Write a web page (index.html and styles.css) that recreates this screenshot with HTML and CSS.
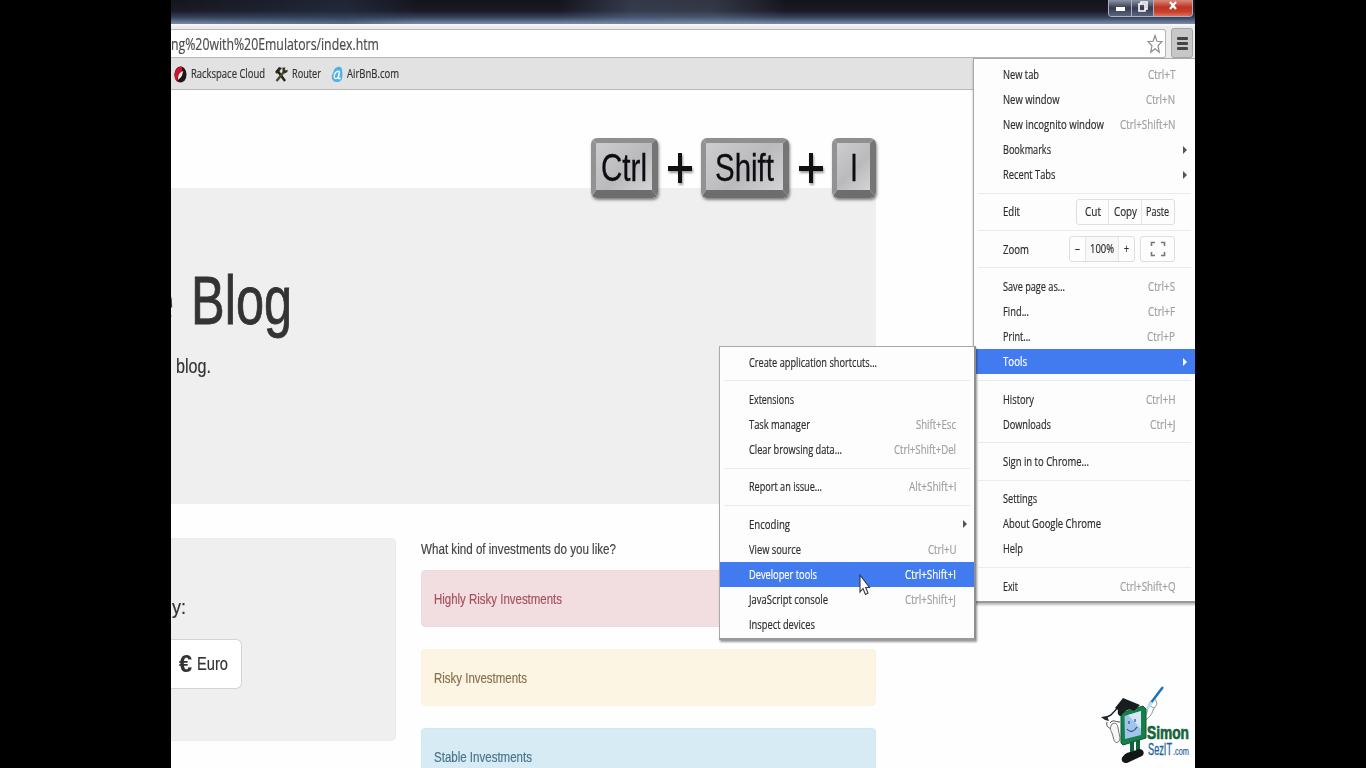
FILE: index.html
```html
<!DOCTYPE html>
<html lang="en">
<head>
<meta charset="utf-8">
<title>Blog</title>
<link rel="stylesheet" href="styles.css">
</head>
<body>
<main class="frame">
  <header class="titlebar">
    <div class="win-controls">
      <span class="win min"><i></i></span>
      <span class="win max"><svg width="10" height="11" viewBox="0 0 10 11"><path d="M3 3V1h6v7H7M1 3h6v7H1z" fill="none" stroke="#fff" stroke-width="1.6"/></svg></span>
      <span class="win close"><svg width="8" height="9" viewBox="0 0 8 9"><path d="M1 1l6 7M7 1L1 8" stroke="#fff" stroke-width="2.3"/></svg></span>
    </div>
  </header>
  <div class="toolbar">
    <div class="omnibox"><span class="t url" data-w="208">ng%20with%20Emulators/index.htm</span>
      <svg class="star" width="16" height="20" viewBox="0 0 16 20"><path d="M8 1.5l1.9 5.8 5 .3-3.9 4.2 1.3 6.5L8 14.8l-4.3 3.5L5 11.800 1.100 7.600l5-.3z" fill="#fff" stroke="#8d8d8d" stroke-width="1.2"/></svg>
    </div>
    <div class="menu-btn"><i></i><i></i><i></i></div>
  </div>
  <nav class="bookmarks">
    <span class="bm"><svg width="13" height="17" viewBox="0 0 13 17"><ellipse cx="6.500" cy="8.500" rx="6" ry="8" fill="#1d1517"/><path d="M8 .6C3 1 .3 5 .5 9.500c.1 3 1.300 5.500 3 6.500 0-5 1-8 4.500-10z" fill="#c8142c"/><path d="M4 14c0-4 .5-6 3-8l2.500-1C8 7 9 10 6 12z" fill="#f4e9ea"/></svg><span class="t" data-w="74">Rackspace Cloud</span></span>
    <span class="bm"><svg width="14" height="17" viewBox="0 0 14 17"><path d="M3 4l8 11" stroke="#25220f" stroke-width="2.400"/><path d="M11.500 4L2.500 15" stroke="#4a4632" stroke-width="2.400"/><path d="M1 6l4-5 3 1-5 6z" fill="#2a2817"/><path d="M8.500 1.500v4l2 2 3-1.500V3.500l-2 1.500-1-1 1-2.500z" fill="#34311b"/></svg><span class="t" data-w="29">Router</span></span>
    <span class="bm"><svg width="12" height="17" viewBox="0 0 12 17"><path d="M3 4C4 1 9-.5 10.500 2c1 2 .8 5 .8 9 0 3-2.300 5-5.300 5S.8 14 .8 11 2 8 3 4z" fill="#4fb0ea"/><path d="M8.500 5.500C6 4.500 3.500 7 3.200 10c-.2 3 2.300 3.500 4 1l1.300-5.500L7.500 12c.2 1.200 1.300 1 2-.3" fill="none" stroke="#fff" stroke-width="1.300"/></svg><span class="t" data-w="52">AirBnB.com</span></span>
  </nav>
  <section class="page">
    <div class="jumbo">
      <h1><span class="t" data-w="146">e Blog</span></h1>
      <p><span class="t" data-w="35">blog.</span></p>
    </div>
    <div class="cols">
      <div class="well">
        <div class="well-label"><span class="t" data-w="14">y:</span></div>
        <div class="euro"><b class="t" data-w="13">€</b><span class="t" data-w="31">Euro</span></div>
      </div>
      <div class="survey">
        <p><span class="t" data-w="195">What kind of investments do you like?</span></p>
        <div class="alert danger"><span class="t" data-w="128">Highly Risky Investments</span></div>
        <div class="alert warning"><span class="t" data-w="93">Risky Investments</span></div>
        <div class="alert info"><span class="t" data-w="98">Stable Investments</span></div>
      </div>
    </div>
  </section>

  <div class="keys">
    <span class="key ctrl"><span class="t" data-w="46">Ctrl</span></span>
    <i class="plus"></i>
    <span class="key shift"><span class="t" data-w="59">Shift</span></span>
    <i class="plus"></i>
    <span class="key letter"><span class="t" data-w="8">I</span></span>
  </div>

  <svg class="logo" width="94" height="82" viewBox="0 0 94 82">
    <path d="M19 36c-5 0-7-3-10 1M6 36c-1 4 1 6 5 7" fill="none" stroke="#444" stroke-width="1"/>
    <path d="M11 38c3-2 6 0 6 4l2 10c0 5-5 6-6 2l-2-7c-2-3-2-6 0-9z" fill="#f6f6f6" stroke="#555" stroke-width=".8"/>
    <path d="M42 31c4-3 5-6 4-9l3-6 5-4 2 6-4 6c-1 5-5 9-10 11M49 20l4 2" fill="#fff" stroke="#777" stroke-width=".8"/>
    <path d="M46 23L61 2" stroke="#bfe0ef" stroke-width="3"/><path d="M50.500 16L62 1" stroke="#1b70b4" stroke-width="2.200"/>
    <path d="M31 54v13M37 52v12" stroke="#12623a" stroke-width="4"/>
    <path d="M20 27l22-7 3 3v29l-23 7-2-2z" fill="#16804b" stroke="#0c5a35" stroke-width="1"/>
    <path d="M23.500 30L40 25v24l-16 4z" fill="#a0c4ea"/><path d="M27 29l13-4v18z" fill="#d5e7f7"/>
    <path d="M28 35v3M34 33v3M26 43c3 4 7 3 10-2" fill="none" stroke="#244f86" stroke-width="1.200"/>
    <path d="M14 22l8-10 17 7-6 6c-5-3-9-1-13 5-2 0-4-2-3-6z" fill="#181d20"/><path d="M22 16L10 29l-6 3" fill="none" stroke="#181d20" stroke-width="1.400"/><path d="M0 31l6-1 2 5-4-1z" fill="#23272a"/>
    <path d="M21 72c2-4 6-6 9-6l8-3c5 0 6 5 3 7l-15 7c-4 0-6-2-5-5z" fill="#111617"/>
    <text class="logo-a" x="46" y="52.500" textLength="42" lengthAdjust="spacingAndGlyphs">Simon</text>
    <text class="logo-b" x="47" y="69" textLength="24" lengthAdjust="spacingAndGlyphs">SezIT</text>
    <text class="logo-c" x="72" y="69" textLength="16" lengthAdjust="spacingAndGlyphs">.com</text>
  </svg>

  <div class="menu main-menu">
    <div class="row"><span class="t" data-w="36">New tab</span><kbd class="t" data-w="27.5">Ctrl+T</kbd></div>
    <div class="row"><span class="t" data-w="56.5">New window</span><kbd class="t" data-w="29">Ctrl+N</kbd></div>
    <div class="row"><span class="t" data-w="101">New incognito window</span><kbd class="t" data-w="55.5">Ctrl+Shift+N</kbd></div>
    <div class="row"><span class="t" data-w="48">Bookmarks</span><i class="arrow"></i></div>
    <div class="row"><span class="t" data-w="52.5">Recent Tabs</span><i class="arrow"></i></div>
    <hr>
    <div class="row"><span class="t" data-w="17">Edit</span><span class="group edit"><span><b class="t" data-w="16">Cut</b></span><span><b class="t" data-w="23">Copy</b></span><span><b class="t" data-w="23">Paste</b></span></span></div>
    <hr>
    <div class="row"><span class="t" data-w="26">Zoom</span><span class="zoom"><span class="group zoomer"><span><b class="t" data-w="5">–</b></span><span><b class="t" data-w="24">100%</b></span><span><b class="t" data-w="5">+</b></span></span><span class="group full"><svg width="16" height="16" viewBox="0 0 16 16"><path d="M1.500 5V1.500H5M11 1.500h3.500V5M14.500 11v3.500H11M5 14.500H1.500V11" fill="none" stroke="#777" stroke-width="1.600"/></svg></span></span></div>
    <hr>
    <div class="row"><span class="t" data-w="62">Save page as...</span><kbd class="t" data-w="27">Ctrl+S</kbd></div>
    <div class="row"><span class="t" data-w="26">Find...</span><kbd class="t" data-w="27">Ctrl+F</kbd></div>
    <div class="row"><span class="t" data-w="27.5">Print...</span><kbd class="t" data-w="28">Ctrl+P</kbd></div>
    <div class="row on"><span class="t" data-w="24">Tools</span><i class="arrow"></i></div>
    <hr>
    <div class="row"><span class="t" data-w="31">History</span><kbd class="t" data-w="29.5">Ctrl+H</kbd></div>
    <div class="row"><span class="t" data-w="48">Downloads</span><kbd class="t" data-w="25.5">Ctrl+J</kbd></div>
    <hr>
    <div class="row"><span class="t" data-w="86">Sign in to Chrome...</span></div>
    <hr>
    <div class="row"><span class="t" data-w="34">Settings</span></div>
    <div class="row"><span class="t" data-w="98">About Google Chrome</span></div>
    <div class="row"><span class="t" data-w="20">Help</span></div>
    <hr>
    <div class="row"><span class="t" data-w="15">Exit</span><kbd class="t" data-w="55.5">Ctrl+Shift+Q</kbd></div>
  </div>

  <div class="menu sub-menu">
    <div class="row"><span class="t" data-w="128">Create application shortcuts...</span></div>
    <hr>
    <div class="row"><span class="t" data-w="45">Extensions</span></div>
    <div class="row"><span class="t" data-w="61">Task manager</span><kbd class="t" data-w="40">Shift+Esc</kbd></div>
    <div class="row"><span class="t" data-w="93">Clear browsing data...</span><kbd class="t" data-w="62">Ctrl+Shift+Del</kbd></div>
    <hr>
    <div class="row"><span class="t" data-w="73">Report an issue...</span><kbd class="t" data-w="47.5">Alt+Shift+I</kbd></div>
    <hr>
    <div class="row"><span class="t" data-w="41">Encoding</span><i class="arrow"></i></div>
    <div class="row"><span class="t" data-w="52">View source</span><kbd class="t" data-w="28.5">Ctrl+U</kbd></div>
    <div class="row on"><span class="t" data-w="68">Developer tools</span><kbd class="t" data-w="51">Ctrl+Shift+I</kbd></div>
    <div class="row"><span class="t" data-w="79">JavaScript console</span><kbd class="t" data-w="51">Ctrl+Shift+J</kbd></div>
    <div class="row"><span class="t" data-w="66">Inspect devices</span></div>
  </div>
  <svg class="cursor" width="12" height="22" viewBox="0 0 12 22"><path d="M1 1v17l3-3.500 2.500 6 2.500-1.500-2.300-5.500H10.500z" fill="#fff" stroke="#30364a" stroke-width="1.100"/></svg>
</main>
<script src="fit.js"></script>
</body>
</html>
```
FILE: styles.css
```css
* { box-sizing: border-box; }
body { margin: 0; height: 768px; background: #000; overflow: hidden; display: flex; justify-content: center; font-family: "Liberation Sans", Arial, sans-serif; }
.frame { position: relative; width: 1024px; height: 768px; background: #fefefe; overflow: hidden; display: flex; flex-direction: column; }
.t { display: inline-block; white-space: nowrap; transform-origin: 0 50%; flex: none; -webkit-text-stroke: .2px currentColor; }
p, h1 { margin: 0; font-weight: normal; }

/* Window chrome */
.titlebar { height: 24px; flex: none; display: flex; justify-content: flex-end; background: linear-gradient(90deg, #18141c00 0%, #30405a66 17%, #18141c00 24%, #1a182000 38%, #7080a055 45%, #8090a844 53%, #1a182000 60%), linear-gradient(#15141d 0, #191a25 45%, #35415a 72%, #7b8dac 100%); }
.win-controls { display: flex; height: 17px; margin-right: 2px; width: 85px; border: 1px solid #a9b2c4; border-top: 0; border-radius: 0 0 4px 4px; overflow: hidden; }
.win { display: flex; align-items: center; justify-content: center; background: linear-gradient(#8c93a4, #343b4f 50%, #59647d); border-right: 1px solid #a9b2c4; padding-bottom: 3px; }
.min { width: 23px; } .max { width: 22px; }
.min i { width: 9px; height: 4px; background: #fff; margin-top: 4px; }
.close { flex: 1; border: 0; background: linear-gradient(#d98a7c, #bd3324 45%, #c8402c 75%, #e0705a); padding-bottom: 5px; }
.toolbar { height: 34px; flex: none; background: #ececec; border-top: 2px solid #f6f6f8; display: flex; padding: 2px 2px 0 0; gap: 5px; }
.omnibox { flex: 1; height: 29px; margin-top: 1px; background: #fff; border: 1px solid #b5b5b5; border-left: 0; border-radius: 0 3px 3px 0; display: flex; justify-content: space-between; align-items: center; padding-right: 2px; }
.url { font: 16px/24px "Open Sans", sans-serif; color: #4c4c4c; }
.menu-btn { width: 22px; height: 30px; border: 1px solid #a5a5a5; border-radius: 3px; background: #c7c7c7; display: flex; flex-direction: column; gap: 2px; align-items: center; justify-content: center; }
.menu-btn i { width: 11px; height: 3px; border-radius: 1px; background: #444; }
.bookmarks { height: 32px; flex: none; background: #e2e2e2; border-bottom: 1px solid #b9b9b9; display: flex; align-items: center; padding: 1px 0 0 3px; gap: 9.3px; font: 12.6px/20px "Open Sans", sans-serif; color: #333; }
.bm { display: flex; gap: 4px; align-items: center; }

/* Page */
.page { padding-top: 98px; width: 705px; flex: 1; color: #333; }
.jumbo { height: 316px; background: #efefef; padding-top: 74px; }
.jumbo h1 { font-size: 68px; line-height: 76px; margin-left: -25px; word-spacing: 4px; }
.jumbo h1 .t { -webkit-text-stroke-width: .9px; }
.jumbo p { font-size: 21px; line-height: 28px; margin: 14px 0 0 5px; }
.cols { display: flex; gap: 25px; margin-top: 34px; }
.well { width: 225px; height: 203px; background: #efefef; border-radius: 0 5px 5px 0; border: 1px solid #ebebeb; border-left: 0; padding-top: 54px; }
.well-label { font-size: 21px; line-height: 28px; padding-left: 1px; }
.euro { width: 71px; height: 50px; margin-top: 18px; background: #fff; border: 1px solid #d4d4d4; border-left: 0; border-radius: 0 6px 6px 0; display: flex; align-items: center; gap: 5px; padding-left: 8px; font-size: 19px; }
.euro b { font-size: 24px; line-height: 24px; }
.survey { width: 455px; font-size: 15.5px; line-height: 22px; }
.survey p { height: 32px; color: #444; }
.alert { height: 57px; border-radius: 4px; border: 1px solid; padding: 17px 0 0 12px; margin-bottom: 22px; }
.danger { background: #f2dde1; border-color: #efd9dd; color: #a5525d; }
.warning { background: #fdf5e3; border-color: #fcf2df; color: #86724e; }
.info { background: #d7ebf4; border-color: #d0e8f1; color: #48758c; }

/* Keycaps */
.keys { position: absolute; left: 420px; top: 138px; display: flex; align-items: center; gap: 9.5px; color: #0c0c12; font-size: 38px; }
.key { height: 60px; display: flex; align-items: center; justify-content: center; border: solid; border-width: 5px 6px 8px 5px; border-color: #8f8f8f #757575 #6d6d6d #929292; border-radius: 6px; padding-top: 3px; background: linear-gradient(135deg, #cdcdd0, #bababd 55%, #d4d4d6); box-shadow: 1px 2px 3px #0007; }
.key .t { -webkit-text-stroke-width: .3px; }
.ctrl { width: 67px; } .shift { width: 88px; } .letter { width: 44px; }
.plus { width: 24px; height: 30px; background: linear-gradient(#111, #111) 50% / 100% 5px no-repeat, linear-gradient(#111, #111) 50% / 4px 100% no-repeat; filter: drop-shadow(1px 2px 1px #0006); }

.logo { position: absolute; left: 930px; top: 686px; }
.logo-a { font: bold 19px "Liberation Sans", sans-serif; fill: #17633b; stroke: #17633b; stroke-width: .7; }
.logo-b { font: 16.5px "Liberation Sans", sans-serif; fill: #1a6399; stroke: #1a6399; stroke-width: .3; }
.logo-c { font: 11px "Liberation Sans", sans-serif; fill: #1a6399; stroke: #1a6399; stroke-width: .2; }

/* Menus */
.menu { position: absolute; background: #fdfdfd; border: 1px solid #a9a9a9; font: 12.6px/25px "Open Sans", sans-serif; color: #2e2b2f; }
.main-menu { left: 802px; top: 58px; width: 223px; height: 545px; padding-top: 2.6px; border-bottom: 2px solid #999; box-shadow: 0 2px 2px #0004; }
.sub-menu { left: 548px; top: 346px; width: 257px; height: 294px; padding-top: 2.6px; border-right: 2px solid #8f8f8f; border-bottom: 2px solid #999; box-shadow: 1px 2px 2px #0006; }
.row { height: 25.15px; padding: 0 20px 0 28.6px; display: flex; justify-content: space-between; align-items: center; }
.sub-menu .row { padding-right: 18px; }
.on { background: #427bf0; color: #fff; }
.menu hr { height: 1px; margin: 5.500px 4px 5.600px; border: 0; background: #ebebeb; }
kbd { font: inherit; color: #a0a0a0; }
.on kbd { color: #fff; }
.menu b { font-weight: normal; }
.arrow { border: solid transparent; border-width: 4px 0 4px 4px; border-left-color: #555; margin-right: -12px; }
.sub-menu .arrow { margin-right: -11px; }
.on .arrow { border-left-color: #fff; }
.group { display: flex; height: 26px; border: 1px solid #dedede; border-radius: 3px; line-height: 24px; }
.group > span { display: flex; align-items: center; justify-content: center; border-right: 1px solid #e4e4e4; }
.group > span:last-child { border-right: 0; }
.edit { width: 99px; }
.edit > span { width: 33px; }
.zoom { display: flex; gap: 5px; }
.zoomer { width: 66px; }
.zoomer > span { flex: 1; }
.zoomer > span:nth-child(2) { flex: 0 0 33px; background: #f8f8f8; }
.full { width: 35px; align-items: center; justify-content: center; }
.cursor { position: absolute; left: 688px; top: 574px; }
```
FILE: fit.js
```js
// Condense each label horizontally to its declared width.
document.querySelectorAll('.t[data-w]').forEach(function (el) {
  var w = parseFloat(el.dataset.w);
  var natural = el.getBoundingClientRect().width;
  el.style.width = w + 'px';
  el.style.transform = 'scaleX(' + w / natural + ')';
});
```
